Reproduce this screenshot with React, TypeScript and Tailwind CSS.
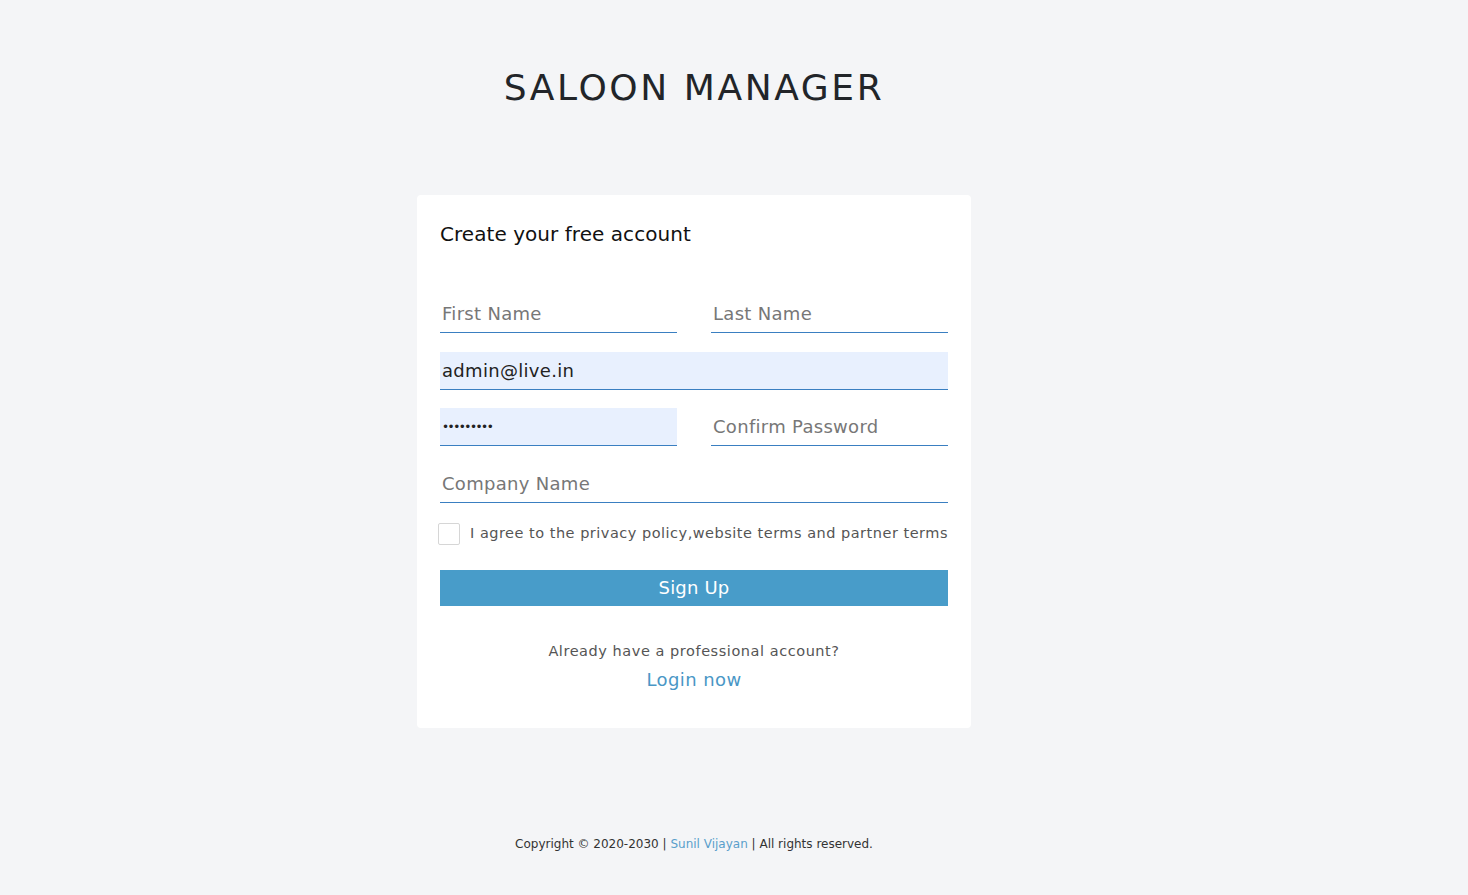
import React from "react";

const font = { fontFamily: '"DejaVu Sans", "Open Sans", sans-serif' };

const fieldBase =
  "h-[38px] px-[2px] border-b border-[#3a7fc1] text-[18px] tracking-[0.3px] text-[#222] placeholder:text-[#777] outline-none";

const App = () => {
  return (
    <div
      className="min-h-screen bg-[#f4f5f7] flex flex-col items-center pr-[80px]"
      style={font}
    >
      <h1 className="mt-[62px] text-[36px] leading-[52px] tracking-[2.6px] text-[#222529] font-normal">
        SALOON MANAGER
      </h1>

      <div className="mt-[81px] w-[554px] bg-white rounded-[4px] px-[23px] pt-[25px] pb-[35px]">
        <h2 className="text-[20px] leading-[28px] text-[#111] tracking-[0.05px]">
          Create your free account
        </h2>

        <form className="mt-[47px] flex flex-col gap-[18px]">
          <div className="flex gap-[34px]">
            <input placeholder="First Name" className={`w-[237px] bg-transparent ${fieldBase}`} />
            <input placeholder="Last Name" className={`w-[237px] bg-transparent ${fieldBase}`} />
          </div>
          <input defaultValue="admin@live.in" className={`w-full mt-[1px] bg-[#e8f0fe] ${fieldBase}`} />
          <div className="flex gap-[34px]">
            <input
              type="password"
              defaultValue="123456789"
              className="w-[237px] h-[38px] px-[2px] border-b border-[#3a7fc1] text-[12px] tracking-[-1.5px] text-[#222] outline-none bg-[#e8f0fe]"
            />
            <input
              type="password"
              placeholder="Confirm Password"
              className={`w-[237px] bg-transparent ${fieldBase}`}
            />
          </div>
          <input placeholder="Company Name" className={`w-full h-[39px] bg-transparent ${fieldBase}`} />

          <label className="flex items-center gap-[10px] -ml-[2px] mt-[2px]">
            <span className="w-[22px] h-[22px] border border-[#d6d6d6] rounded-[2px] bg-white shrink-0" />
            <span className="text-[14.5px] text-[#555] tracking-[0.5px] whitespace-nowrap">
              I agree to the privacy policy,website terms and partner terms
            </span>
          </label>

          <button
            type="button"
            className="mt-[7px] w-full h-[36px] bg-[#489cc9] text-white text-[18px] leading-[36px] tracking-[0.2px]"
          >
            Sign Up
          </button>
        </form>

        <div className="mt-[35px] flex flex-col items-center">
          <p className="text-[14.5px] leading-[20px] text-[#555] tracking-[0.55px]">
            Already have a professional account?
          </p>
          <a href="#" className="mt-[6px] text-[18px] leading-[26px] text-[#4a97c6] tracking-[0.4px]">
            Login now
          </a>
        </div>
      </div>

      <footer className="mt-[107px] text-[12px] text-[#333]">
        Copyright © 2020-2030 | <span className="text-[#5a9fcb]">Sunil Vijayan</span> | All rights reserved.
      </footer>
    </div>
  );
};

export default App;
